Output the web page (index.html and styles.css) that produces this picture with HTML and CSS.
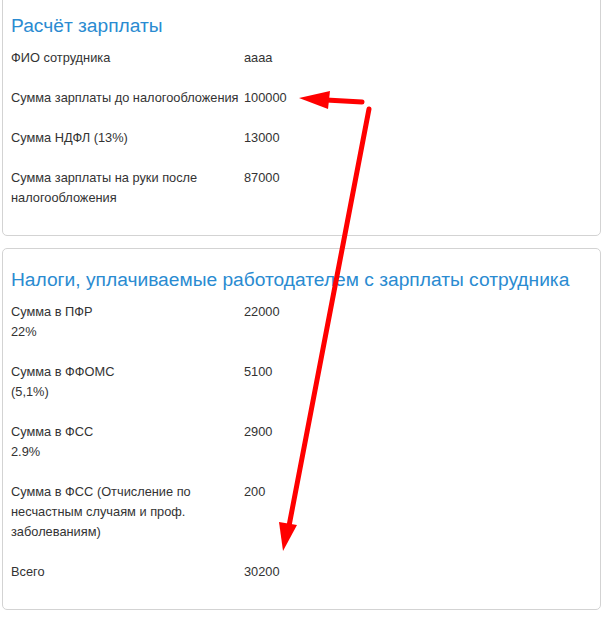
FILE: index.html
```html
<!DOCTYPE html>
<html lang="ru">

<head>
    <meta charset="UTF-8">
    <meta name="viewport" content="width=device-width, initial-scale=1.0">
    <title>Расчёт зарплаты</title>
    <link rel="stylesheet" href="styles.css">
</head>

<body>
    <div class="page">
        <div class="panel first">
            <h3 class="title">Расчёт зарплаты</h3>
            <div class="row"><div class="label">ФИО сотрудника</div><div class="value">аааа</div></div>
            <div class="row"><div class="label">Сумма зарплаты до налогообложения</div><div class="value">100000</div></div>
            <div class="row"><div class="label">Сумма НДФЛ (13%)</div><div class="value">13000</div></div>
            <div class="row"><div class="label">Сумма зарплаты на руки после налогообложения</div><div class="value">87000</div></div>
        </div>

        <div class="panel">
            <h3 class="title">Налоги, уплачиваемые работодателем с зарплаты сотрудника</h3>
            <div class="row"><div class="label">Сумма в ПФР<br>22%</div><div class="value">22000</div></div>
            <div class="row"><div class="label">Сумма в ФФОМС<br>(5,1%)</div><div class="value">5100</div></div>
            <div class="row"><div class="label">Сумма в ФСС<br>2.9%</div><div class="value">2900</div></div>
            <div class="row"><div class="label">Сумма в ФСС (Отчисление по несчастным случаям и проф. заболеваниям)</div><div class="value">200</div></div>
            <div class="row"><div class="label">Всего</div><div class="value">30200</div></div>
        </div>

        <!-- стрелки поверх скриншота -->
        <svg class="arrows" width="602" height="621" viewBox="0 0 602 621">
            <line x1="362" y1="102" x2="326" y2="100" stroke="#f00" stroke-width="5" stroke-linecap="round" />
            <polygon points="299,98 330,91 328,109" fill="#f00" />
            <line x1="369" y1="109" x2="289" y2="526" stroke="#f00" stroke-width="5" stroke-linecap="round" />
            <polygon points="283,551 297,525 279,522" fill="#f00" />
        </svg>
    </div>
</body>

</html>
```

FILE: styles.css
```css
* {
    padding: 0;
    margin: 0;
    box-sizing: border-box;
}

body {
    font-family: "Liberation Sans", Arial, sans-serif;
    font-size: 12.8px;
    line-height: 20px;
    color: #333;
    background: #fff;
}

.page {
    position: relative;
    padding: 0 1px 0 2px;
    margin-top: -6px;
}

.panel {
    border: 1px solid #d3d3d3;
    border-radius: 5px;
    padding: 21px 8px 7px;
    margin-bottom: 12px;
}

.title {
    font-size: 19.2px;
    font-weight: normal;
    line-height: 20px;
    color: #2a8bd1;
    margin-bottom: 12px;
}

.row {
    display: grid;
    grid-template-columns: 233px 1fr;
    padding-bottom: 20px;
}

.arrows {
    position: absolute;
    left: 0;
    top: 6px;
    pointer-events: none;
}
```
